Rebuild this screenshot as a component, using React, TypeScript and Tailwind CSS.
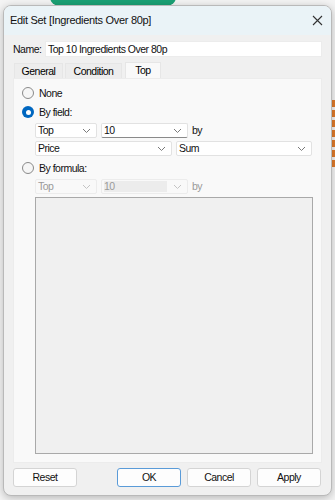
import React from "react";

const font = { fontFamily: '"Liberation Sans", Arial, sans-serif' };

const Chevron = ({ muted }: { muted?: boolean }) => (
  <svg width="9" height="6" viewBox="0 0 9 6" className="shrink-0">
    <polyline
      points="1,1 4.5,4.5 8,1"
      fill="none"
      stroke={muted ? "#c4c4c4" : "#7a7a7a"}
      strokeWidth="1"
    />
  </svg>
);

const Select = ({
  value,
  width,
  editable,
  disabled,
}: {
  value: string;
  width: string;
  editable?: boolean;
  disabled?: boolean;
}) => (
  <div
    className={`${width} h-[15px] flex items-center justify-between pl-[2px] pr-[5px] rounded-[2px] border ${
      disabled ? "border-[#ececec] bg-[#f9f9f9]" : "border-[#e2e2e2] bg-white"
    } ${editable && !disabled ? "border-b-[#8a8a8a]" : ""}`}
  >
    {editable ? (
      <span
        className={`flex-1 h-[11px] flex items-center mr-[6px] ${
          disabled ? "bg-[#ececec] text-[#9a9a9a]" : "text-[#111]"
        }`}
      >
        {value}
      </span>
    ) : (
      <span className={disabled ? "text-[#9a9a9a]" : "text-[#111]"}>{value}</span>
    )}
    <Chevron muted={disabled} />
  </div>
);

const Radio = ({ label, checked }: { label: string; checked?: boolean }) => (
  <div className="flex items-center gap-[5px] h-[14px]">
    {checked ? (
      <span className="size-[12px] rounded-full bg-[#0067c0] flex items-center justify-center">
        <span className="size-[5px] rounded-full bg-white" />
      </span>
    ) : (
      <span className="size-[12px] rounded-full border border-[#8a8a8a] bg-[#f6f6f6]" />
    )}
    <span className="text-[#111]">{label}</span>
  </div>
);

const Button = ({ label, primary }: { label: string; primary?: boolean }) => (
  <button
    className={`h-[19px] flex items-center justify-center rounded-[3px] border bg-[#fdfdfd] text-[#111] ${
      primary ? "border-[#5a9bd8]" : "border-[#d4d4d4]"
    } w-[64px]`}
  >
    {label}
  </button>
);

export default function App() {
  return (
    <div
      className="relative w-[335px] h-[500px] overflow-hidden bg-[#f4f4f4] text-[10.5px] tracking-[-0.5px] leading-none"
      style={font}
    >
      {/* desktop behind the dialog */}
      <div className="absolute left-[50px] top-[-12px] w-[126px] h-[18px] rounded-[9px] bg-[#1aa175]" />
      <div className="absolute right-0 top-[100px] w-[3px] h-[80px] flex flex-col gap-[3px]">
        {[0, 1, 2, 3, 4, 5, 6].map((i) => (
          <span key={i} className="h-[7px] bg-[#e07b2a]" />
        ))}
      </div>

      <div className="relative ml-[3px] mt-[5px] w-[329px] h-[491px] rounded-[8px] border border-[#b9b9b9] bg-[#f0f0f0] shadow-[0_2px_8px_rgba(0,0,0,0.25)] overflow-hidden flex flex-col">
        {/* title bar */}
        <div className="h-[29px] bg-[#eaf3f7] flex items-center justify-between pl-[6px] pr-[8px] shrink-0">
          <span className="text-[11px] tracking-[-0.3px] text-[#111]">
            Edit Set [Ingredients Over 80p]
          </span>
          <svg width="11" height="11" viewBox="0 0 11 11">
            <path d="M1 1 L10 10 M10 1 L1 10" stroke="#333" strokeWidth="1.1" />
          </svg>
        </div>

        {/* name */}
        <div className="flex items-center mt-[6px] pl-[9px] pr-[9px] h-[16px]">
          <span className="w-[32px] shrink-0 whitespace-nowrap text-[#111]">Name:</span>
          <div className="flex-1 h-[16px] bg-white border border-[#ececec] flex items-center pl-[2px] text-[#111]">
            Top 10 Ingredients Over 80p
          </div>
        </div>

        {/* tabs */}
        <div className="flex items-end mt-[5px] ml-[10px] h-[16px]">
          <div className="h-[15px] w-[49px] flex items-center justify-center border border-b-0 border-[#e6e6e6] bg-[#ededed]">
            General
          </div>
          <div className="h-[15px] w-[57px] flex items-center justify-center border border-b-0 border-[#e6e6e6] bg-[#ededed] ml-[2px]">
            Condition
          </div>
          <div className="h-[16px] w-[36px] flex items-center justify-center border border-b-0 border-[#e6e6e6] bg-[#f9f9f9] ml-[3px]">
            Top
          </div>
        </div>

        {/* tab panel */}
        <div className="ml-[9px] w-[309px] h-[385px] bg-[#f9f9f9] border border-[#ececec] flex flex-col pl-[8px] pt-[7px]">
          <Radio label="None" />
          <div className="mt-[5px]">
            <Radio label="By field:" checked />
          </div>
          <div className="ml-[13px] mt-[4px] flex items-center gap-[4px]">
            <Select value="Top" width="w-[62px]" />
            <Select value="10" width="w-[87px]" editable />
            <span className="text-[#111]">by</span>
          </div>
          <div className="ml-[13px] mt-[3px] flex items-center gap-[4px]">
            <Select value="Price" width="w-[137px]" />
            <Select value="Sum" width="w-[136px]" />
          </div>
          <div className="mt-[5px]">
            <Radio label="By formula:" />
          </div>
          <div className="ml-[13px] mt-[4px] flex items-center gap-[4px]">
            <Select value="Top" width="w-[62px]" disabled />
            <Select value="10" width="w-[87px]" editable disabled />
            <span className="text-[#9a9a9a]">by</span>
          </div>
          <div className="ml-[13px] mt-[3px] w-[278px] h-[257px] border border-[#a9a9a9] bg-[#f0f0f0]" />
        </div>

        {/* buttons */}
        <div className="flex items-center mt-[5px] pl-[9px] pr-[10px]">
          <Button label="Reset" />
          <div className="ml-auto flex gap-[6px]">
            <Button label="OK" primary />
            <Button label="Cancel" />
            <Button label="Apply" />
          </div>
        </div>
      </div>
    </div>
  );
}
